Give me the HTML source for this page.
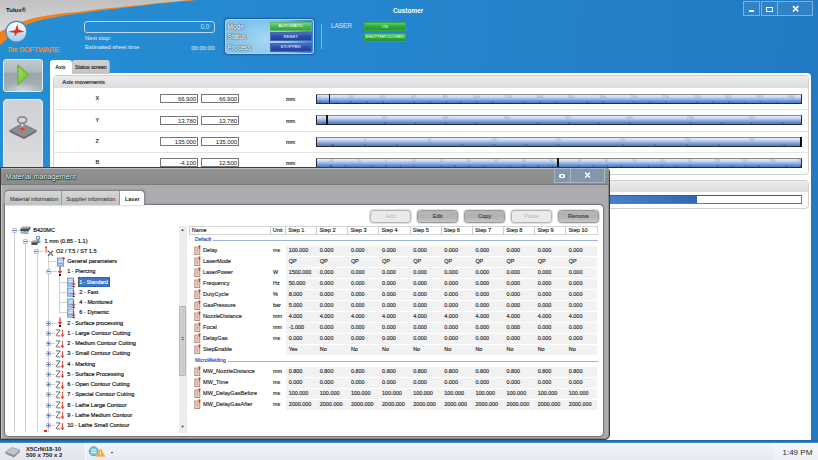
<!DOCTYPE html>
<html>
<head>
<meta charset="utf-8">
<style>
html,body{margin:0;padding:0;}
body{width:818px;height:460px;overflow:hidden;position:relative;background:#2281c9;font-family:"Liberation Sans",sans-serif;font-size:6px;color:#222;}
.abs{position:absolute;}
div,span{box-sizing:border-box;}
.t{position:absolute;white-space:nowrap;line-height:1;}
.b{-webkit-text-stroke:0.18px #333;}
/* top area */
#bg{left:0;top:0;width:818px;height:460px;background:linear-gradient(95deg,#248fd4 0%,#2487cf 40%,#2279c2 100%);}
.wbtn{position:absolute;top:1px;height:15px;border:1px solid #7fb0dc;background:rgba(255,255,255,0.06);}
/* main panel */
#main{left:50px;top:73px;width:761px;height:380px;background:#fff;border-radius:0 4px 0 0;}
.tab{position:absolute;top:60px;height:14px;border-radius:3px 3px 0 0;}
.grp{position:absolute;border:1px solid #d0d0d0;border-radius:4px;background:#fff;overflow:hidden;}
.grph{position:absolute;left:0;top:0;right:0;background:linear-gradient(#ececec,#dcdcdc);}
.inp{position:absolute;width:38px;height:9.4px;border:1px solid #777;background:#fff;font-size:6.1px;text-align:right;padding-right:1px;line-height:8.2px;color:#222;letter-spacing:-0.1px;}
.sl{position:absolute;left:316px;width:486px;height:10px;border:1px solid #2a2a2a;border-top-color:#8c8884;border-bottom:1px solid #2c2c2c;background:linear-gradient(#e6ecf6 0%,#cfdcf1 25%,#9bb8e4 50%,#6a95d6 75%,#4679c8 100%);overflow:hidden;}
.tk{position:absolute;left:0;bottom:0;height:2.5px;width:100%;opacity:0.4;}
.sn{position:absolute;top:0.5px;font-size:3.2px;color:#8aa0c4;line-height:1;white-space:nowrap;transform:translateX(-50%);}
.rowline{position:absolute;left:53px;width:755px;height:1px;background:#e4e4e4;}
/* dialog */
#dlg{left:0;top:167px;width:610px;height:273px;background:#abacaf;border:1px solid #3c3c3c;border-radius:0 5px 5px 0;box-shadow:inset 1px 1px 0 #c4c4c4,inset -1px -1px 0 #8a8a8a;}
#dtitle{left:1px;top:0;width:608px;height:17px;background:linear-gradient(#929292,#8a8a8a);border-radius:0 4px 0 0;border-top:1px solid #bdbdbd;border-bottom:1px solid #7c7c7c;}
.dbtn{position:absolute;top:1px;height:15px;background:#8496aa;border:1px solid #aab6c4;}
.dtab{position:absolute;top:190.5px;height:14.5px;font-size:5.5px;line-height:16px;text-align:center;color:#222;}
#dwhite{left:5px;top:204.6px;width:598px;height:231.4px;background:#fff;border-radius:0 4px 4px 4px;box-shadow:0 0 1.5px 0.5px #707070;}
.btn{position:absolute;top:209.5px;width:41px;height:13px;border-radius:3.5px;border:1px solid #999;background:linear-gradient(#b6b6b6,#b2b2b2 55%,#c6c6c6);font-size:5.6px;text-align:center;line-height:11px;color:#333;box-shadow:0 0 0 1px #e2e2e2,0 0 2px #bbb;-webkit-text-stroke:0.12px #444;}
.btn.dis{background:#eaeaea;border-color:#b4b4b4;color:#b4b4b4;-webkit-text-stroke:0;}
.tr{position:absolute;font-size:5.6px;white-space:nowrap;line-height:7px;height:7px;color:#111;letter-spacing:0;-webkit-text-stroke:0.18px #222;}
.hd{position:absolute;top:226px;height:9px;font-size:5.6px;line-height:8.4px;border-left:1px solid #ccc;padding-left:2px;color:#1a1a1a;-webkit-text-stroke:0.15px #333;}
.cell{position:absolute;font-size:5.45px;line-height:7px;height:7px;white-space:nowrap;color:#1a1a1a;-webkit-text-stroke:0.15px #333;}
.rowbg{position:absolute;left:286px;width:311px;height:10px;background:#f2f2f2;}
.ico{position:absolute;width:6px;height:8px;background:linear-gradient(#edd2c8,#dcb0a2);border:1px solid #b48474;}
.ico:after{content:"";position:absolute;left:3px;top:-2px;width:2px;height:4px;background:#e02010;}
.exp{position:absolute;width:5px;height:5px;border:1px solid #b4c0d6;background:#fbfcfe;border-radius:1px;}
.exp:after{content:"";position:absolute;left:0;top:1px;width:3px;height:1px;background:#6474a6;}
.exp.pl:before{content:"";position:absolute;left:1px;top:0;width:1px;height:3px;background:#6474a6;}
.tline{position:absolute;background:#d0d0d0;}
</style>
</head>
<body>
<div id="bg" class="abs"></div>
<!-- top-left swoosh -->
<svg class="abs" style="left:0;top:0" width="260" height="60" viewBox="0 0 260 60">
 <defs><linearGradient id="gg" x1="0" y1="0" x2="0" y2="1"><stop offset="0" stop-color="#c0c0c0"/><stop offset="0.5" stop-color="#cecece"/><stop offset="1" stop-color="#dadada"/></linearGradient></defs>
 <path d="M0,0 L0,45 C1.1,44.0 4.5,41.0 6.7,39 C8.9,37.0 10.1,35.4 13.5,33 C16.9,30.6 22.6,26.6 27,24.5 C31.4,22.4 35.5,21.4 40,20.2 C44.5,19.0 49.5,18.4 54,17.5 C58.5,16.6 62.5,15.7 67,15 C71.5,14.3 76.5,13.8 81,13.2 C85.5,12.6 89.2,12.2 94,11.5 C98.8,10.8 102.3,10.2 110,9.3 C117.7,8.4 130.0,7.0 140,5.9 C150.0,4.8 160.5,3.6 170,2.6 C179.5,1.6 192.5,0.4 197,0 Z" fill="#f0821e"/>
 <path d="M0,0 L0,31.7 C2.2,30.6 9.0,26.9 13.5,25 C18.0,23.1 22.6,21.4 27,20 C31.4,18.6 35.5,17.7 40,16.8 C44.5,15.9 49.5,15.3 54,14.6 C58.5,13.9 62.5,13.3 67,12.8 C71.5,12.3 76.5,12.0 81,11.5 C85.5,11.0 89.2,10.4 94,9.8 C98.8,9.2 102.3,8.9 110,8.1 C117.7,7.3 130.0,5.9 140,4.9 C150.0,3.9 161.3,2.8 170,2 C178.7,1.2 188.3,0.3 192,0 Z" fill="url(#gg)"/>
</svg>
<div class="t" style="left:6px;top:7px;font-size:6px;font-weight:bold;color:#111;">Tulus®</div>
<!-- logo -->
<svg class="abs" style="left:4px;top:19px" width="25" height="25" viewBox="4 19 25 25">
 <defs><linearGradient id="lg" x1="0" y1="0" x2="0" y2="1"><stop offset="0" stop-color="#ffffff"/><stop offset="0.48" stop-color="#e6ecf6"/><stop offset="0.52" stop-color="#c4e0f2"/><stop offset="1" stop-color="#a4d0ec"/></linearGradient></defs>
 <circle cx="16.45" cy="31.8" r="10.4" fill="url(#lg)" stroke="#4486c8" stroke-width="1.2"/>
 <path d="M17.3,23.9 L18.4,29.6 L24.6,31.8 L17.6,32.7 L15,36.3 L14.5,32.7 L8.3,31.8 L15.3,30 Z" fill="#e03020"/>
</svg>
<div class="t" style="left:7px;top:46px;font-size:7.6px;font-weight:bold;color:#f28c34;letter-spacing:-0.35px;"><i style="font-size:6.4px">The</i> <span style="font-weight:normal;-webkit-text-stroke:0.25px #f28c34;">SOFTWARE</span></div>

<!-- top info -->
<div class="abs" style="left:84px;top:20.7px;width:130.5px;height:12px;border:1px solid #bcd8f0;border-radius:3px;"></div>
<div class="t" style="left:200.5px;top:23.5px;font-size:6.4px;color:#cfe2f4;">0.0</div>
<div class="t" style="left:85px;top:36.2px;font-size:5.8px;color:#e4f0fa;">Next stop:</div>
<div class="t" style="left:85px;top:45px;font-size:5.8px;color:#e4f0fa;">Estimated sheet time</div>
<div class="t" style="left:191.2px;top:45px;font-size:6px;color:#e4f0fa;">00:00:00</div>

<!-- mode box -->
<div class="abs" style="left:225px;top:18.8px;width:88.6px;height:35.6px;border:1px solid #b4d2ea;border-radius:3px;background:radial-gradient(ellipse 42px 30px at 40px 20px,#a8d8f4 0%,#8fcaee 50%,rgba(120,185,230,0) 100%),linear-gradient(90deg,#88c4ea 0%,#5cacde 55%,#3a8cd2 100%);box-shadow:0 0 1.5px 0.5px #1c5c98;"></div>
<div class="t" style="left:227.6px;top:23.8px;font-size:6.5px;color:#fff;-webkit-text-stroke:0.25px #dfe8f0;text-shadow:0 0 1px #234,0 0 1px #234,0 0 1.2px #345,0.4px 0.4px 0 #345;">Mode</div>
<div class="t" style="left:227.6px;top:34.3px;font-size:6.5px;color:#fff;-webkit-text-stroke:0.25px #dfe8f0;text-shadow:0 0 1px #234,0 0 1px #234,0 0 1.2px #345,0.4px 0.4px 0 #345;">Status</div>
<div class="t" style="left:227.6px;top:45px;font-size:6.5px;color:#fff;-webkit-text-stroke:0.25px #dfe8f0;text-shadow:0 0 1px #234,0 0 1px #234,0 0 1.2px #345,0.4px 0.4px 0 #345;">Process</div>
<div class="abs" style="left:269.5px;top:21.7px;width:42.5px;height:9.3px;background:linear-gradient(#7cd880,#48b854 50%,#34a444);border:1px solid #58b860;"></div>
<div class="t" style="left:269.5px;top:24.2px;width:42.5px;text-align:center;font-size:4.3px;color:#fff;">AUTOMATIC</div>
<div class="abs" style="left:269.5px;top:32.3px;width:42.5px;height:9px;background:linear-gradient(#4c6cc4,#2e4caa 50%,#26409a);border:1px solid #4666b4;"></div>
<div class="t" style="left:269.5px;top:34.8px;width:42.5px;text-align:center;font-size:4.3px;color:#fff;">RESET</div>
<div class="abs" style="left:269.5px;top:42.8px;width:42.5px;height:9px;background:linear-gradient(#4c6cc4,#2e4caa 50%,#26409a);border:1px solid #4666b4;"></div>
<div class="t" style="left:269.5px;top:45.3px;width:42.5px;text-align:center;font-size:4.3px;color:#fff;">STOPPED</div>
<div class="abs" style="left:321px;top:24px;width:1px;height:25px;background:#86b6de;"></div>
<div class="t" style="left:331px;top:23px;font-size:6.4px;color:#cadcee;-webkit-text-stroke:0.15px #cadcee;">LASER</div>
<div class="abs" style="left:363.9px;top:22px;width:42px;height:9px;background:linear-gradient(#5ccc64,#2ea63e 50%,#249434);border:1px solid #3aa848;"></div>
<div class="t" style="left:363.9px;top:24.5px;width:42px;text-align:center;font-size:4.3px;color:#fff;">ON</div>
<div class="abs" style="left:363.9px;top:33px;width:42px;height:8.6px;background:linear-gradient(#5ccc64,#2ea63e 50%,#249434);border:1px solid #3aa848;"></div>
<div class="t" style="left:363.9px;top:35.3px;width:42px;text-align:center;font-size:4.3px;color:#fff;">SHUTTER CLOSED</div>
<div class="t" style="left:393px;top:7.8px;font-size:6.5px;font-weight:bold;color:#fff;">Customer</div>

<!-- window buttons -->
<div class="wbtn" style="left:743px;width:17px;"></div>
<div class="wbtn" style="left:761px;width:17px;"></div>
<div class="wbtn" style="left:777px;width:36px;"></div>
<div class="abs" style="left:748.8px;top:9.6px;width:5.2px;height:2px;background:#fff;"></div>
<div class="abs" style="left:766px;top:7.2px;width:6.8px;height:4.5px;border:1.5px solid #fff;"></div>
<svg class="abs" style="left:791px;top:5px" width="10" height="8" viewBox="0 0 10 8"><path d="M2,1.2 L7.3,6.5 M7.3,1.2 L2,6.5" stroke="#fff" stroke-width="1.7"/></svg>

<!-- left buttons -->
<div class="abs" style="left:2.5px;top:59px;width:40.5px;height:33.3px;border-radius:3px;border:1px solid #e6ecee;background:radial-gradient(ellipse 18px 9px at 50% 100%,rgba(214,222,226,0.95),rgba(200,208,212,0) 100%),linear-gradient(#c2cace 0%,#adb9be 40%,#98a6ac 41%,#9eacb2 70%,#aab6ba 100%);"></div>
<svg class="abs" style="left:16px;top:63px" width="15" height="24" viewBox="16 63 15 24"><defs><linearGradient id="pg" x1="0" y1="0" x2="1" y2="1"><stop offset="0" stop-color="#a4dc58"/><stop offset="1" stop-color="#74be3c"/></linearGradient></defs><path d="M18,65.5 L28.3,74.8 L18,84.3 Z" fill="url(#pg)" stroke="#78b840" stroke-width="1.8" stroke-linejoin="round"/></svg>
<div class="abs" style="left:2.5px;top:99px;width:40.5px;height:76px;border-radius:4px;border:1px solid #e8ecee;background:linear-gradient(#d2d2d6 0%,#d6d6d8 50%,#e0e0e2 100%);"></div>
<svg class="abs" style="left:8px;top:115px" width="30" height="25" viewBox="8 115 30 25">
 <path d="M9.6,130.5 L22,123.5 L36.5,130.5 L24,137.5 Z" fill="#8c8e90" stroke="#5c5e60" stroke-width="0.6"/>
 <path d="M9.6,130.5 L9.6,132 L24,139 L36.5,132 L36.5,130.5 L24,137.5 Z" fill="#606264"/>
 <path d="M20.8,122 L23.8,122 L22.8,129 L21.8,129 Z" fill="#bfe0f4"/>
 <path d="M22.3,126 L23.3,128.2 L25.6,129 L23.3,129.8 L22.3,132 L21.3,129.8 L19,129 L21.3,128.2 Z" fill="#f03828"/>
 <ellipse cx="22.2" cy="120" rx="4.4" ry="3.2" fill="none" stroke="#707274" stroke-width="1.6"/>
 <ellipse cx="22.2" cy="119.6" rx="4.4" ry="3.2" fill="none" stroke="#a4a6a8" stroke-width="0.6"/>
</svg>

<!-- MAIN PANEL -->
<div id="main" class="abs"></div>
<div class="tab" style="left:50px;width:22px;background:#fff;"></div>
<div class="tab" style="left:72px;width:38px;background:linear-gradient(#d0d0d0,#c4c4c4);border-right:1px solid #b0b0b0;"></div>
<div class="t b" style="left:55.5px;top:64.8px;font-size:5.2px;color:#222;">Axis</div>
<div class="t b" style="left:75px;top:64.8px;font-size:5.2px;color:#222;">Status screen</div>

<div class="grp" style="left:53px;top:75px;width:756px;height:100px;"><div class="grph" style="height:12px;"></div></div>
<div class="t b" style="left:62.3px;top:80px;font-size:5.8px;color:#222;">Axis movements</div>
<div class="grp" style="left:53px;top:180px;width:756px;height:29px;"><div class="grph" style="height:11px;"></div></div>
<div class="abs" style="left:600px;top:195.2px;width:202px;height:9.3px;border:1px solid #777;border-top-color:#555;background:#fff;"></div>
<div class="abs" style="left:600px;top:196.2px;width:96.8px;height:7.3px;background:linear-gradient(90deg,#4a82cc,#2e68b4);"></div>

<div class="rowline" style="top:109px;"></div>
<div class="rowline" style="top:131px;"></div>
<div class="rowline" style="top:152px;"></div>

<div class="t" style="left:95.6px;top:96.3px;font-size:5.5px;font-weight:bold;color:#333;">X</div>
<div class="t" style="left:95.6px;top:117.8px;font-size:5.5px;font-weight:bold;color:#333;">Y</div>
<div class="t" style="left:95.6px;top:139px;font-size:5.5px;font-weight:bold;color:#333;">Z</div>
<div class="t" style="left:95.6px;top:160.3px;font-size:5.5px;font-weight:bold;color:#333;">B</div>

<div class="inp" style="left:160px;top:94px;">66.900</div><div class="inp" style="left:201px;top:94px;">66.900</div>
<div class="inp" style="left:160px;top:116px;">13.780</div><div class="inp" style="left:201px;top:116px;">13.780</div>
<div class="inp" style="left:160px;top:137px;">135.000</div><div class="inp" style="left:201px;top:137px;">135.000</div>
<div class="inp" style="left:160px;top:158px;">-4.100</div><div class="inp" style="left:201px;top:158px;">12.500</div>

<div class="t b" style="left:286px;top:97px;font-size:5.5px;color:#222;">mm</div>
<div class="t b" style="left:286px;top:118.5px;font-size:5.5px;color:#222;">mm</div>
<div class="t b" style="left:286px;top:140px;font-size:5.5px;color:#222;">mm</div>
<div class="t b" style="left:286px;top:161px;font-size:5.5px;color:#222;">mm</div>

<div class="sl" style="top:94px;"><div class="tk" style="background:repeating-linear-gradient(90deg,#1c2c50 0,#1c2c50 0.8px,transparent 0.8px,transparent 15.72px);background-position:2.6px 0;"></div><div class="sn" style="left:2.6px;">0</div><div class="sn" style="left:34.0px;">200</div><div class="sn" style="left:65.5px;">400</div><div class="sn" style="left:96.9px;">600</div><div class="sn" style="left:128.4px;">800</div><div class="sn" style="left:159.8px;">1000</div><div class="sn" style="left:191.2px;">1200</div><div class="sn" style="left:222.7px;">1400</div><div class="sn" style="left:254.1px;">1600</div><div class="sn" style="left:285.6px;">1800</div><div class="sn" style="left:317.0px;">2000</div><div class="sn" style="left:348.4px;">2200</div><div class="sn" style="left:379.9px;">2400</div><div class="sn" style="left:411.3px;">2600</div><div class="sn" style="left:442.8px;">2800</div><div class="sn" style="left:474.2px;">3000</div></div>
<div class="sl" style="top:115px;"><div class="tk" style="background:repeating-linear-gradient(90deg,#1c2c50 0,#1c2c50 0.8px,transparent 0.8px,transparent 30.6px);background-position:6.2px 0;"></div><div class="sn" style="left:6.2px;">0</div><div class="sn" style="left:67.4px;">200</div><div class="sn" style="left:128.6px;">400</div><div class="sn" style="left:189.8px;">600</div><div class="sn" style="left:251.0px;">800</div><div class="sn" style="left:312.2px;">1000</div><div class="sn" style="left:373.4px;">1200</div><div class="sn" style="left:434.6px;">1400</div></div>
<div class="sl" style="top:137px;"><div class="tk" style="background:repeating-linear-gradient(90deg,#1c2c50 0,#1c2c50 0.8px,transparent 0.8px,transparent 32.2px);background-position:15.6px 0;"></div><div class="sn" style="left:47.8px;">0</div><div class="sn" style="left:112.3px;">50</div><div class="sn" style="left:176.8px;">100</div><div class="sn" style="left:241.3px;">150</div><div class="sn" style="left:305.8px;">200</div><div class="sn" style="left:370.3px;">250</div><div class="sn" style="left:434.8px;">300</div></div>
<div class="sl" style="top:158px;"><div class="tk" style="background:repeating-linear-gradient(90deg,#1c2c50 0,#1c2c50 0.8px,transparent 0.8px,transparent 13.8px);background-position:13.8px 0;"></div><div class="sn" style="left:13.8px;">-20</div><div class="sn" style="left:41.4px;">-10</div><div class="sn" style="left:69.0px;">0</div><div class="sn" style="left:96.6px;">10</div><div class="sn" style="left:124.2px;">20</div><div class="sn" style="left:151.8px;">30</div><div class="sn" style="left:179.4px;">40</div><div class="sn" style="left:207.0px;">50</div><div class="sn" style="left:234.6px;">60</div><div class="sn" style="left:262.2px;">70</div><div class="sn" style="left:289.8px;">80</div><div class="sn" style="left:317.4px;">90</div><div class="sn" style="left:345.0px;">100</div><div class="sn" style="left:372.6px;">110</div><div class="sn" style="left:400.2px;">120</div><div class="sn" style="left:427.8px;">130</div><div class="sn" style="left:455.4px;">140</div><div class="sn" style="left:483.0px;">150</div></div>
<div class="abs" style="left:328.5px;top:94px;width:1.5px;height:10px;background:#111;"></div>
<div class="abs" style="left:326.1px;top:115px;width:1.5px;height:10px;background:#111;"></div>
<div class="abs" style="left:800px;top:137px;width:2px;height:10px;background:#111;"></div>
<div class="abs" style="left:557px;top:158px;width:1.5px;height:10px;background:#111;"></div>

<!-- taskbar -->
<div class="abs" style="left:0;top:440px;width:818px;height:3.2px;background:linear-gradient(#1c66a8,#1f74ba 60%,#5a9ad0);"></div>
<div class="abs" style="left:0;top:443px;width:818px;height:17px;background:linear-gradient(#f3f4fa,#e8eaf3);"></div>
<div class="abs" style="left:0;top:443px;width:85px;height:17px;background:linear-gradient(#eceef6,#e2e4ee);"></div>
<div class="abs" style="left:773px;top:443px;width:45px;height:17px;background:linear-gradient(#f6f7fb,#eef0f6);"></div>
<div class="t" style="left:26px;top:446.8px;font-size:5.95px;font-weight:bold;color:#222;">X5CrNi18-10</div>
<div class="t" style="left:26px;top:453.3px;font-size:5.95px;font-weight:bold;color:#222;">500 x 750 x 2</div>
<div class="abs" style="left:85px;top:443px;width:1px;height:17px;background:#fafbfe;"></div>
<svg class="abs" style="left:4px;top:445px" width="18" height="14" viewBox="0 0 18 14"><path d="M1.5,7 L8,2.5 L16,5 L10,10.5 Z" fill="#c2c6c8" stroke="#8c9092" stroke-width="0.6"/><path d="M1.5,7 L1.5,8.8 L10,12.5 L16,6.8 L16,5 L10,10.5 Z" fill="#8a8e90"/></svg>
<svg class="abs" style="left:88px;top:445px" width="18" height="13" viewBox="88 445 18 13"><circle cx="93.7" cy="451.2" r="4.4" fill="#7cc8dc" stroke="#3a98b4" stroke-width="0.9"/><rect x="91.3" y="449.4" width="4.8" height="1.1" fill="#e8f6fa"/><rect x="91.3" y="451.8" width="4.8" height="1.1" fill="#e8f6fa"/><path d="M100.3,448.6 L105,456.6 L95.7,456.6 Z" fill="#f8a428" stroke="#f0c070" stroke-width="0.7" stroke-linejoin="round"/><rect x="99.9" y="451" width="0.9" height="3" fill="#fff"/><rect x="99.9" y="454.6" width="0.9" height="0.9" fill="#fff"/></svg>
<div class="abs" style="left:111px;top:451.7px;width:2.3px;height:0.9px;background:#444;"></div>
<div class="t" style="left:782.5px;top:449px;font-size:8px;color:#2a2a2a;">1:49 PM</div>

<!-- DIALOG -->
<div id="dlg" class="abs"></div>
<div id="dtitle" class="abs" style="left:1px;top:168px;"></div>
<div class="t" style="left:5.6px;top:173px;font-size:7.25px;color:#fff;text-shadow:0 0 1px #222,0 0 1px #222,0 0 1.5px #333,0.5px 0.5px 0 #333;">Material management</div>
<div class="dbtn" style="left:554px;top:168px;width:17px;"></div>
<div class="dbtn" style="left:570px;top:168px;width:35px;"></div>
<div class="abs" style="left:558.8px;top:173.6px;width:6.6px;height:4.2px;border-radius:1.6px;background:#fff;"></div>
<div class="abs" style="left:561.2px;top:174.8px;width:2px;height:2px;border-radius:1px;background:#667;"></div>
<svg class="abs" style="left:583px;top:171px" width="10" height="8" viewBox="0 0 10 8"><path d="M2.3,1.6 L6.9,6.4 M6.9,1.6 L2.3,6.4" stroke="#fff" stroke-width="1.5"/></svg>

<div id="dwhite" class="abs"></div>
<div class="abs" style="left:4.5px;top:190px;width:140.5px;height:15px;border-radius:4px 4px 0 0;background:#888;box-shadow:0 0 1.5px #666;"></div>
<div class="dtab" style="left:5.3px;width:57px;background:linear-gradient(#d6d6d6,#c2c2c2);border-right:1px solid #9c9c9c;border-radius:3.5px 0 0 0;padding-left:1.5px;">Material information</div>
<div class="dtab" style="left:62.3px;width:58px;background:linear-gradient(#d6d6d6,#c2c2c2);border-right:1px solid #9c9c9c;">Supplier information</div>
<div class="dtab" style="left:120.3px;width:24px;background:#fff;font-weight:bold;border-radius:0 3.5px 0 0;">Laser</div>

<div class="btn dis" style="left:370px;">Add</div>
<div class="btn" style="left:417px;">Edit</div>
<div class="btn" style="left:464px;">Copy</div>
<div class="btn dis" style="left:511px;">Paste</div>
<div class="btn" style="left:558px;">Remove</div>

<!--TREE-->
<div class="tline" style="left:13.6px;top:230.9px;width:1px;height:201.1px;"></div>
<div class="tline" style="left:25.0px;top:241.2px;width:1px;height:190.8px;"></div>
<div class="tline" style="left:36.5px;top:251.4px;width:1px;height:180.6px;"></div>
<div class="tline" style="left:48.3px;top:255.4px;width:1px;height:176.6px;"></div>
<div class="tline" style="left:59.3px;top:274.9px;width:1px;height:38.0px;"></div>
<div class="tline" style="left:14.1px;top:230.4px;width:6.9px;height:1px;"></div>
<div class="exp" style="left:12px;top:228px;"></div>
<svg class="abs" style="left:20.3px;top:226.3px" width="11" height="9" viewBox="0 0 11 9"><path d="M2.4,0.6 L10.4,0.6 L8.4,2.6 L0.4,2.6 Z" fill="#a6a6a6"/><path d="M0.4,2.6 L8.4,2.6 L10.4,0.6 L10.4,2.8 L8.4,5.2 L0.4,5.2 Z" fill="#4c4c4c"/><path d="M0.8,7.6 L1.8,5.6 L2.8,7.6 M3.8,5.6 L3.8,7.6 L5.4,7.6 L5.4,5.6 Z M8.6,5.8 L6.8,5.8 L6.8,7.6 L8.6,7.6" fill="none" stroke="#3a72d8" stroke-width="0.8"/></svg>
<div class="tr" style="left:33.2px;top:227.4px;">B420MC</div>
<div class="tline" style="left:25.5px;top:240.7px;width:6.5px;height:1px;"></div>
<div class="exp" style="left:23px;top:239px;"></div>
<svg class="abs" style="left:31.3px;top:236.2px" width="11" height="10" viewBox="0 0 11 10"><path d="M2.2,4.2 L7.6,4.2 L5.8,6.2 L0.4,6.2 Z" fill="#a6a6a6"/><path d="M0.4,6.2 L5.8,6.2 L7.6,4.2 L7.6,6.4 L5.8,9 L0.4,9 Z" fill="#4c4c4c"/><path d="M5.4,0.6 L8.6,0.6 L8.6,3.2 L5.4,3.2 Z M7,3.2 L7,7 M8.8,4.4 L8.8,7.2" fill="none" stroke="#3a78dc" stroke-width="0.9"/></svg>
<div class="tr" style="left:44.6px;top:237.7px;">1 mm (0.85 - 1.1)</div>
<div class="tline" style="left:37.0px;top:250.9px;width:6.0px;height:1px;"></div>
<div class="exp" style="left:34px;top:249px;"></div>
<svg class="abs" style="left:44.6px;top:245.8px" width="9" height="11" viewBox="0 0 9 11"><rect x="0.6" y="1.4" width="0.9" height="5.6" fill="#e43828"/><circle cx="1.05" cy="1.2" r="1" fill="#e43828"/><path d="M2.6,4.6 L8,9.6 M8,4.8 L3,9.8" stroke="#3c3c3c" stroke-width="1.1"/><path d="M4.4,6.4 L6.4,8.2" stroke="#d8b040" stroke-width="1"/></svg>
<div class="tr" style="left:56.0px;top:247.9px;">O2 / T.5 / ST 1.5</div>
<div class="tline" style="left:48.8px;top:261.1px;width:7.2px;height:1px;"></div>
<svg class="abs" style="left:56.7px;top:256.6px" width="10" height="11" viewBox="0 0 10 11"><rect x="0.4" y="1" width="6.2" height="8.2" fill="#a9c8ec" stroke="#5a94d8" stroke-width="0.8"/><rect x="1.6" y="2.4" width="3.8" height="0.8" fill="#e8f0fa"/><rect x="1.6" y="4.2" width="3.8" height="0.8" fill="#e8f0fa"/><rect x="1.6" y="6" width="3.8" height="0.8" fill="#6a9ad8"/><circle cx="6.6" cy="1.4" r="1.2" fill="#e83020"/></svg>
<div class="tr" style="left:67.2px;top:258.1px;">General parameters</div>
<div class="tline" style="left:48.8px;top:271.4px;width:8.2px;height:1px;"></div>
<div class="exp" style="left:46px;top:269px;"></div>
<svg class="abs" style="left:56.8px;top:265.9px" width="6" height="11" viewBox="0 0 6 11"><rect x="2.4" y="0.5" width="1.2" height="5.5" fill="#e03020"/><path d="M0.8,5 L5.2,5 L3,8 Z" fill="#e03020"/><rect x="2" y="8" width="2" height="2" fill="#222"/></svg>
<div class="tr" style="left:67.2px;top:268.4px;">1 - Piercing</div>
<div class="tline" style="left:59.8px;top:281.6px;width:7.2px;height:1px;"></div>
<svg class="abs" style="left:66.7px;top:277.1px" width="10" height="11" viewBox="0 0 10 11"><rect x="0.4" y="1" width="6.2" height="8.2" fill="#a9c8ec" stroke="#5a94d8" stroke-width="0.8"/><rect x="1.6" y="2.4" width="3.8" height="0.8" fill="#e8f0fa"/><rect x="1.6" y="4.2" width="3.8" height="0.8" fill="#e8f0fa"/><rect x="1.6" y="6" width="3.8" height="0.8" fill="#6a9ad8"/><rect x="6.1" y="2.8" width="1.1" height="4.4" fill="#e83424"/><path d="M4.6,6.4 L8.8,6.4 L6.7,8.8 Z" fill="#e83424"/><rect x="5.8" y="9" width="1.8" height="1.2" fill="#222"/></svg>
<div class="abs" style="left:78.2px;top:276.5px;width:31.8px;height:10.6px;background:#3a76cc;border:1px dotted #54463a;"></div>
<div class="tr" style="left:79.3px;top:278.6px;color:#fff;-webkit-text-stroke:0.1px #fff;letter-spacing:-0.2px;">1 - Standard</div>
<div class="tline" style="left:59.8px;top:291.9px;width:7.2px;height:1px;"></div>
<svg class="abs" style="left:66.7px;top:287.4px" width="10" height="11" viewBox="0 0 10 11"><rect x="0.4" y="1" width="6.2" height="8.2" fill="#a9c8ec" stroke="#5a94d8" stroke-width="0.8"/><rect x="1.6" y="2.4" width="3.8" height="0.8" fill="#e8f0fa"/><rect x="1.6" y="4.2" width="3.8" height="0.8" fill="#e8f0fa"/><rect x="1.6" y="6" width="3.8" height="0.8" fill="#6a9ad8"/><rect x="6.1" y="2.8" width="1.1" height="4.4" fill="#e83424"/><path d="M4.6,6.4 L8.8,6.4 L6.7,8.8 Z" fill="#e83424"/><rect x="5.8" y="9" width="1.8" height="1.2" fill="#222"/></svg>
<div class="tr" style="left:79.3px;top:288.9px;">2 - Fast</div>
<div class="tline" style="left:59.8px;top:302.1px;width:7.2px;height:1px;"></div>
<svg class="abs" style="left:66.7px;top:297.6px" width="10" height="11" viewBox="0 0 10 11"><rect x="0.4" y="1" width="6.2" height="8.2" fill="#a9c8ec" stroke="#5a94d8" stroke-width="0.8"/><rect x="1.6" y="2.4" width="3.8" height="0.8" fill="#e8f0fa"/><rect x="1.6" y="4.2" width="3.8" height="0.8" fill="#e8f0fa"/><rect x="1.6" y="6" width="3.8" height="0.8" fill="#6a9ad8"/><rect x="6.1" y="2.8" width="1.1" height="4.4" fill="#e83424"/><path d="M4.6,6.4 L8.8,6.4 L6.7,8.8 Z" fill="#e83424"/><rect x="5.8" y="9" width="1.8" height="1.2" fill="#222"/></svg>
<div class="tr" style="left:79.3px;top:299.1px;">4 - Monitored</div>
<div class="tline" style="left:59.8px;top:312.4px;width:7.2px;height:1px;"></div>
<svg class="abs" style="left:66.7px;top:307.9px" width="10" height="11" viewBox="0 0 10 11"><rect x="0.4" y="1" width="6.2" height="8.2" fill="#a9c8ec" stroke="#5a94d8" stroke-width="0.8"/><rect x="1.6" y="2.4" width="3.8" height="0.8" fill="#e8f0fa"/><rect x="1.6" y="4.2" width="3.8" height="0.8" fill="#e8f0fa"/><rect x="1.6" y="6" width="3.8" height="0.8" fill="#6a9ad8"/><rect x="6.1" y="2.8" width="1.1" height="4.4" fill="#e83424"/><path d="M4.6,6.4 L8.8,6.4 L6.7,8.8 Z" fill="#e83424"/><rect x="5.8" y="9" width="1.8" height="1.2" fill="#222"/></svg>
<div class="tr" style="left:79.3px;top:309.4px;">6 - Dynamic</div>
<div class="tline" style="left:48.8px;top:322.6px;width:8.2px;height:1px;"></div>
<div class="exp pl" style="left:46px;top:321px;"></div>
<svg class="abs" style="left:56.8px;top:317.1px" width="6" height="11" viewBox="0 0 6 11"><rect x="2.4" y="0.5" width="1.2" height="5.5" fill="#e03020"/><path d="M0.8,5 L5.2,5 L3,8 Z" fill="#e03020"/><rect x="2" y="8" width="2" height="2" fill="#222"/></svg>
<div class="tr" style="left:67.2px;top:319.6px;">2 - Surface processing</div>
<div class="tline" style="left:48.8px;top:332.9px;width:6.2px;height:1px;"></div>
<div class="exp pl" style="left:46px;top:331px;"></div>
<svg class="abs" style="left:55.0px;top:328.4px" width="11" height="10" viewBox="0 0 11 10"><path d="M0.9,1.8 L5.2,2 L1.2,7.2 Q1,7.8 1.8,7.8 L5.4,8" fill="none" stroke="#3c3c3c" stroke-width="0.75"/><rect x="7.1" y="2" width="0.8" height="5.5" fill="#e83828"/><path d="M5.6,6.6 L9.4,6.6 L7.5,9.2 Z" fill="#e83828"/></svg>
<div class="tr" style="left:67.2px;top:329.9px;">1 - Large Contour Cutting</div>
<div class="tline" style="left:48.8px;top:343.1px;width:6.2px;height:1px;"></div>
<div class="exp pl" style="left:46px;top:341px;"></div>
<svg class="abs" style="left:55.0px;top:338.6px" width="11" height="10" viewBox="0 0 11 10"><path d="M0.9,1.8 L5.2,2 L1.2,7.2 Q1,7.8 1.8,7.8 L5.4,8" fill="none" stroke="#3c3c3c" stroke-width="0.75"/><rect x="7.1" y="2" width="0.8" height="5.5" fill="#e83828"/><path d="M5.6,6.6 L9.4,6.6 L7.5,9.2 Z" fill="#e83828"/></svg>
<div class="tr" style="left:67.2px;top:340.1px;">2 - Medium Contour Cutting</div>
<div class="tline" style="left:48.8px;top:353.4px;width:6.2px;height:1px;"></div>
<div class="exp pl" style="left:46px;top:351px;"></div>
<svg class="abs" style="left:55.0px;top:348.9px" width="11" height="10" viewBox="0 0 11 10"><path d="M0.9,1.8 L5.2,2 L1.2,7.2 Q1,7.8 1.8,7.8 L5.4,8" fill="none" stroke="#3c3c3c" stroke-width="0.75"/><rect x="7.1" y="2" width="0.8" height="5.5" fill="#e83828"/><path d="M5.6,6.6 L9.4,6.6 L7.5,9.2 Z" fill="#e83828"/></svg>
<div class="tr" style="left:67.2px;top:350.4px;">3 - Small Contour Cutting</div>
<div class="tline" style="left:48.8px;top:363.6px;width:6.2px;height:1px;"></div>
<div class="exp pl" style="left:46px;top:362px;"></div>
<svg class="abs" style="left:55.0px;top:359.1px" width="11" height="10" viewBox="0 0 11 10"><path d="M0.9,1.8 L5.2,2 L1.2,7.2 Q1,7.8 1.8,7.8 L5.4,8" fill="none" stroke="#3c3c3c" stroke-width="0.75"/><rect x="7.1" y="2" width="0.8" height="5.5" fill="#e83828"/><path d="M5.6,6.6 L9.4,6.6 L7.5,9.2 Z" fill="#e83828"/></svg>
<div class="tr" style="left:67.2px;top:360.6px;">4 - Marking</div>
<div class="tline" style="left:48.8px;top:373.9px;width:6.2px;height:1px;"></div>
<div class="exp pl" style="left:46px;top:372px;"></div>
<svg class="abs" style="left:55.0px;top:369.4px" width="11" height="10" viewBox="0 0 11 10"><path d="M0.9,1.8 L5.2,2 L1.2,7.2 Q1,7.8 1.8,7.8 L5.4,8" fill="none" stroke="#3c3c3c" stroke-width="0.75"/><rect x="7.1" y="2" width="0.8" height="5.5" fill="#e83828"/><path d="M5.6,6.6 L9.4,6.6 L7.5,9.2 Z" fill="#e83828"/></svg>
<div class="tr" style="left:67.2px;top:370.9px;">5 - Surface Processing</div>
<div class="tline" style="left:48.8px;top:384.1px;width:6.2px;height:1px;"></div>
<div class="exp pl" style="left:46px;top:382px;"></div>
<svg class="abs" style="left:55.0px;top:379.6px" width="11" height="10" viewBox="0 0 11 10"><path d="M0.9,1.8 L5.2,2 L1.2,7.2 Q1,7.8 1.8,7.8 L5.4,8" fill="none" stroke="#3c3c3c" stroke-width="0.75"/><rect x="7.1" y="2" width="0.8" height="5.5" fill="#e83828"/><path d="M5.6,6.6 L9.4,6.6 L7.5,9.2 Z" fill="#e83828"/></svg>
<div class="tr" style="left:67.2px;top:381.1px;">6 - Open Contour Cutting</div>
<div class="tline" style="left:48.8px;top:394.4px;width:6.2px;height:1px;"></div>
<div class="exp pl" style="left:46px;top:392px;"></div>
<svg class="abs" style="left:55.0px;top:389.9px" width="11" height="10" viewBox="0 0 11 10"><path d="M0.9,1.8 L5.2,2 L1.2,7.2 Q1,7.8 1.8,7.8 L5.4,8" fill="none" stroke="#3c3c3c" stroke-width="0.75"/><rect x="7.1" y="2" width="0.8" height="5.5" fill="#e83828"/><path d="M5.6,6.6 L9.4,6.6 L7.5,9.2 Z" fill="#e83828"/></svg>
<div class="tr" style="left:67.2px;top:391.4px;">7 - Special Contour Cutting</div>
<div class="tline" style="left:48.8px;top:404.6px;width:6.2px;height:1px;"></div>
<div class="exp pl" style="left:46px;top:403px;"></div>
<svg class="abs" style="left:55.0px;top:400.1px" width="11" height="10" viewBox="0 0 11 10"><path d="M0.9,1.8 L5.2,2 L1.2,7.2 Q1,7.8 1.8,7.8 L5.4,8" fill="none" stroke="#3c3c3c" stroke-width="0.75"/><rect x="7.1" y="2" width="0.8" height="5.5" fill="#e83828"/><path d="M5.6,6.6 L9.4,6.6 L7.5,9.2 Z" fill="#e83828"/></svg>
<div class="tr" style="left:67.2px;top:401.6px;">8 - Lathe Large Contour</div>
<div class="tline" style="left:48.8px;top:414.9px;width:6.2px;height:1px;"></div>
<div class="exp pl" style="left:46px;top:413px;"></div>
<svg class="abs" style="left:55.0px;top:410.4px" width="11" height="10" viewBox="0 0 11 10"><path d="M0.9,1.8 L5.2,2 L1.2,7.2 Q1,7.8 1.8,7.8 L5.4,8" fill="none" stroke="#3c3c3c" stroke-width="0.75"/><rect x="7.1" y="2" width="0.8" height="5.5" fill="#e83828"/><path d="M5.6,6.6 L9.4,6.6 L7.5,9.2 Z" fill="#e83828"/></svg>
<div class="tr" style="left:67.2px;top:411.9px;">9 - Lathe Medium Contour</div>
<div class="tline" style="left:48.8px;top:425.1px;width:6.2px;height:1px;"></div>
<div class="exp pl" style="left:46px;top:423px;"></div>
<svg class="abs" style="left:55.0px;top:420.6px" width="11" height="10" viewBox="0 0 11 10"><path d="M0.9,1.8 L5.2,2 L1.2,7.2 Q1,7.8 1.8,7.8 L5.4,8" fill="none" stroke="#3c3c3c" stroke-width="0.75"/><rect x="7.1" y="2" width="0.8" height="5.5" fill="#e83828"/><path d="M5.6,6.6 L9.4,6.6 L7.5,9.2 Z" fill="#e83828"/></svg>
<div class="tr" style="left:67.2px;top:422.1px;">10 - Lathe Small Contour</div>
<div class="abs" style="left:44px;top:430px;width:3px;height:1.5px;background:#e03020;"></div>
<div class="abs" style="left:178.5px;top:226px;width:8px;height:207px;background:#ececec;"></div>
<div class="abs" style="left:179px;top:306px;width:7px;height:70px;background:linear-gradient(90deg,#d8d8da,#c6c6ca 60%,#d4d4d6);border:1px solid #b4b4b8;border-radius:1px;"></div>
<div class="abs" style="left:181px;top:337px;width:3px;height:1px;background:#777;"></div><div class="abs" style="left:181px;top:339px;width:3px;height:1px;background:#777;"></div>
<div class="t" style="left:180.5px;top:228px;font-size:4px;color:#333;">▲</div>
<div class="t" style="left:180.5px;top:425px;font-size:4px;color:#333;">▼</div>
<!--/TREE-->
<!--TABLE-->
<div class="abs" style="left:189px;top:226px;width:409px;height:9px;border:1px solid #d4d4d4;border-left:none;background:#fff;"></div>
<div class="hd" style="left:188.8px;">Name</div>
<div class="hd" style="left:269.7px;">Unit</div>
<div class="hd" style="left:285.3px;">Step 1</div>
<div class="hd" style="left:316.4px;">Step 2</div>
<div class="hd" style="left:347.4px;">Step 3</div>
<div class="hd" style="left:378.4px;">Step 4</div>
<div class="hd" style="left:409.7px;">Step 5</div>
<div class="hd" style="left:440.8px;">Step 6</div>
<div class="hd" style="left:471.9px;">Step 7</div>
<div class="hd" style="left:503.3px;">Step 8</div>
<div class="hd" style="left:534.4px;">Step 9</div>
<div class="hd" style="left:565.4px;">Step 10</div>
<div class="abs" style="left:193px;top:239.5px;width:405px;height:1px;background:#9ab4e0;"></div>
<div class="t" style="left:192.5px;top:236.9px;padding-left:2.6px;font-size:5.1px;-webkit-text-stroke:0.15px #3050c8;color:#2040c0;background:#fff;padding-right:2px;">Default</div>
<div class="rowbg" style="top:245.5px;"></div>
<svg class="abs" style="left:193.5px;top:245.0px" width="8" height="11" viewBox="0 0 8 11"><rect x="0.8" y="2" width="5" height="7.6" fill="#ecd8ce" stroke="#a87c6c" stroke-width="0.8"/><path d="M2,4 L4.6,4 M2,5.6 L4.6,5.6 M2,7.2 L4.6,7.2 M3.3,3.2 L3.3,8.4" stroke="#c8a090" stroke-width="0.6"/><rect x="4.9" y="1" width="1.2" height="3" fill="#e43828"/><circle cx="5.5" cy="1.2" r="1" fill="#e43828"/></svg>
<div class="cell" style="left:203px;top:247.0px;font-size:5.6px;">Delay</div>
<div class="cell" style="left:273px;top:247.0px;">ms</div>
<div class="cell" style="left:288.7px;top:247.0px;">100.000</div>
<div class="cell" style="left:319.8px;top:247.0px;">0.000</div>
<div class="cell" style="left:350.9px;top:247.0px;">0.000</div>
<div class="cell" style="left:382.1px;top:247.0px;">0.000</div>
<div class="cell" style="left:413.2px;top:247.0px;">0.000</div>
<div class="cell" style="left:444.3px;top:247.0px;">0.000</div>
<div class="cell" style="left:475.4px;top:247.0px;">0.000</div>
<div class="cell" style="left:506.5px;top:247.0px;">0.000</div>
<div class="cell" style="left:537.7px;top:247.0px;">0.000</div>
<div class="cell" style="left:568.8px;top:247.0px;">0.000</div>
<div class="rowbg" style="top:256.6px;"></div>
<svg class="abs" style="left:193.5px;top:256.1px" width="8" height="11" viewBox="0 0 8 11"><rect x="0.8" y="2" width="5" height="7.6" fill="#ecd8ce" stroke="#a87c6c" stroke-width="0.8"/><path d="M2,4 L4.6,4 M2,5.6 L4.6,5.6 M2,7.2 L4.6,7.2 M3.3,3.2 L3.3,8.4" stroke="#c8a090" stroke-width="0.6"/><rect x="4.9" y="1" width="1.2" height="3" fill="#e43828"/><circle cx="5.5" cy="1.2" r="1" fill="#e43828"/></svg>
<div class="cell" style="left:203px;top:258.1px;font-size:5.6px;">LaserMode</div>
<div class="cell" style="left:288.7px;top:258.1px;">QP</div>
<div class="cell" style="left:319.8px;top:258.1px;">QP</div>
<div class="cell" style="left:350.9px;top:258.1px;">QP</div>
<div class="cell" style="left:382.1px;top:258.1px;">QP</div>
<div class="cell" style="left:413.2px;top:258.1px;">QP</div>
<div class="cell" style="left:444.3px;top:258.1px;">QP</div>
<div class="cell" style="left:475.4px;top:258.1px;">QP</div>
<div class="cell" style="left:506.5px;top:258.1px;">QP</div>
<div class="cell" style="left:537.7px;top:258.1px;">QP</div>
<div class="cell" style="left:568.8px;top:258.1px;">QP</div>
<div class="rowbg" style="top:267.6px;"></div>
<svg class="abs" style="left:193.5px;top:267.1px" width="8" height="11" viewBox="0 0 8 11"><rect x="0.8" y="2" width="5" height="7.6" fill="#ecd8ce" stroke="#a87c6c" stroke-width="0.8"/><path d="M2,4 L4.6,4 M2,5.6 L4.6,5.6 M2,7.2 L4.6,7.2 M3.3,3.2 L3.3,8.4" stroke="#c8a090" stroke-width="0.6"/><rect x="4.9" y="1" width="1.2" height="3" fill="#e43828"/><circle cx="5.5" cy="1.2" r="1" fill="#e43828"/></svg>
<div class="cell" style="left:203px;top:269.1px;font-size:5.6px;">LaserPower</div>
<div class="cell" style="left:273px;top:269.1px;">W</div>
<div class="cell" style="left:288.7px;top:269.1px;">1500.000</div>
<div class="cell" style="left:319.8px;top:269.1px;">0.000</div>
<div class="cell" style="left:350.9px;top:269.1px;">0.000</div>
<div class="cell" style="left:382.1px;top:269.1px;">0.000</div>
<div class="cell" style="left:413.2px;top:269.1px;">0.000</div>
<div class="cell" style="left:444.3px;top:269.1px;">0.000</div>
<div class="cell" style="left:475.4px;top:269.1px;">0.000</div>
<div class="cell" style="left:506.5px;top:269.1px;">0.000</div>
<div class="cell" style="left:537.7px;top:269.1px;">0.000</div>
<div class="cell" style="left:568.8px;top:269.1px;">0.000</div>
<div class="rowbg" style="top:278.6px;"></div>
<svg class="abs" style="left:193.5px;top:278.1px" width="8" height="11" viewBox="0 0 8 11"><rect x="0.8" y="2" width="5" height="7.6" fill="#ecd8ce" stroke="#a87c6c" stroke-width="0.8"/><path d="M2,4 L4.6,4 M2,5.6 L4.6,5.6 M2,7.2 L4.6,7.2 M3.3,3.2 L3.3,8.4" stroke="#c8a090" stroke-width="0.6"/><rect x="4.9" y="1" width="1.2" height="3" fill="#e43828"/><circle cx="5.5" cy="1.2" r="1" fill="#e43828"/></svg>
<div class="cell" style="left:203px;top:280.1px;font-size:5.6px;">Frequency</div>
<div class="cell" style="left:273px;top:280.1px;">Hz</div>
<div class="cell" style="left:288.7px;top:280.1px;">50.000</div>
<div class="cell" style="left:319.8px;top:280.1px;">0.000</div>
<div class="cell" style="left:350.9px;top:280.1px;">0.000</div>
<div class="cell" style="left:382.1px;top:280.1px;">0.000</div>
<div class="cell" style="left:413.2px;top:280.1px;">0.000</div>
<div class="cell" style="left:444.3px;top:280.1px;">0.000</div>
<div class="cell" style="left:475.4px;top:280.1px;">0.000</div>
<div class="cell" style="left:506.5px;top:280.1px;">0.000</div>
<div class="cell" style="left:537.7px;top:280.1px;">0.000</div>
<div class="cell" style="left:568.8px;top:280.1px;">0.000</div>
<div class="rowbg" style="top:289.7px;"></div>
<svg class="abs" style="left:193.5px;top:289.2px" width="8" height="11" viewBox="0 0 8 11"><rect x="0.8" y="2" width="5" height="7.6" fill="#ecd8ce" stroke="#a87c6c" stroke-width="0.8"/><path d="M2,4 L4.6,4 M2,5.6 L4.6,5.6 M2,7.2 L4.6,7.2 M3.3,3.2 L3.3,8.4" stroke="#c8a090" stroke-width="0.6"/><rect x="4.9" y="1" width="1.2" height="3" fill="#e43828"/><circle cx="5.5" cy="1.2" r="1" fill="#e43828"/></svg>
<div class="cell" style="left:203px;top:291.2px;font-size:5.6px;">DutyCycle</div>
<div class="cell" style="left:273px;top:291.2px;">%</div>
<div class="cell" style="left:288.7px;top:291.2px;">8.000</div>
<div class="cell" style="left:319.8px;top:291.2px;">0.000</div>
<div class="cell" style="left:350.9px;top:291.2px;">0.000</div>
<div class="cell" style="left:382.1px;top:291.2px;">0.000</div>
<div class="cell" style="left:413.2px;top:291.2px;">0.000</div>
<div class="cell" style="left:444.3px;top:291.2px;">0.000</div>
<div class="cell" style="left:475.4px;top:291.2px;">0.000</div>
<div class="cell" style="left:506.5px;top:291.2px;">0.000</div>
<div class="cell" style="left:537.7px;top:291.2px;">0.000</div>
<div class="cell" style="left:568.8px;top:291.2px;">0.000</div>
<div class="rowbg" style="top:300.8px;"></div>
<svg class="abs" style="left:193.5px;top:300.2px" width="8" height="11" viewBox="0 0 8 11"><rect x="0.8" y="2" width="5" height="7.6" fill="#ecd8ce" stroke="#a87c6c" stroke-width="0.8"/><path d="M2,4 L4.6,4 M2,5.6 L4.6,5.6 M2,7.2 L4.6,7.2 M3.3,3.2 L3.3,8.4" stroke="#c8a090" stroke-width="0.6"/><rect x="4.9" y="1" width="1.2" height="3" fill="#e43828"/><circle cx="5.5" cy="1.2" r="1" fill="#e43828"/></svg>
<div class="cell" style="left:203px;top:302.2px;font-size:5.6px;">GasPressure</div>
<div class="cell" style="left:273px;top:302.2px;">bar</div>
<div class="cell" style="left:288.7px;top:302.2px;">5.000</div>
<div class="cell" style="left:319.8px;top:302.2px;">0.000</div>
<div class="cell" style="left:350.9px;top:302.2px;">0.000</div>
<div class="cell" style="left:382.1px;top:302.2px;">0.000</div>
<div class="cell" style="left:413.2px;top:302.2px;">0.000</div>
<div class="cell" style="left:444.3px;top:302.2px;">0.000</div>
<div class="cell" style="left:475.4px;top:302.2px;">0.000</div>
<div class="cell" style="left:506.5px;top:302.2px;">0.000</div>
<div class="cell" style="left:537.7px;top:302.2px;">0.000</div>
<div class="cell" style="left:568.8px;top:302.2px;">0.000</div>
<div class="rowbg" style="top:311.8px;"></div>
<svg class="abs" style="left:193.5px;top:311.3px" width="8" height="11" viewBox="0 0 8 11"><rect x="0.8" y="2" width="5" height="7.6" fill="#ecd8ce" stroke="#a87c6c" stroke-width="0.8"/><path d="M2,4 L4.6,4 M2,5.6 L4.6,5.6 M2,7.2 L4.6,7.2 M3.3,3.2 L3.3,8.4" stroke="#c8a090" stroke-width="0.6"/><rect x="4.9" y="1" width="1.2" height="3" fill="#e43828"/><circle cx="5.5" cy="1.2" r="1" fill="#e43828"/></svg>
<div class="cell" style="left:203px;top:313.3px;font-size:5.6px;">NozzleDistance</div>
<div class="cell" style="left:273px;top:313.3px;">mm</div>
<div class="cell" style="left:288.7px;top:313.3px;">4.000</div>
<div class="cell" style="left:319.8px;top:313.3px;">4.000</div>
<div class="cell" style="left:350.9px;top:313.3px;">4.000</div>
<div class="cell" style="left:382.1px;top:313.3px;">4.000</div>
<div class="cell" style="left:413.2px;top:313.3px;">4.000</div>
<div class="cell" style="left:444.3px;top:313.3px;">4.000</div>
<div class="cell" style="left:475.4px;top:313.3px;">4.000</div>
<div class="cell" style="left:506.5px;top:313.3px;">4.000</div>
<div class="cell" style="left:537.7px;top:313.3px;">4.000</div>
<div class="cell" style="left:568.8px;top:313.3px;">4.000</div>
<div class="rowbg" style="top:322.9px;"></div>
<svg class="abs" style="left:193.5px;top:322.4px" width="8" height="11" viewBox="0 0 8 11"><rect x="0.8" y="2" width="5" height="7.6" fill="#ecd8ce" stroke="#a87c6c" stroke-width="0.8"/><path d="M2,4 L4.6,4 M2,5.6 L4.6,5.6 M2,7.2 L4.6,7.2 M3.3,3.2 L3.3,8.4" stroke="#c8a090" stroke-width="0.6"/><rect x="4.9" y="1" width="1.2" height="3" fill="#e43828"/><circle cx="5.5" cy="1.2" r="1" fill="#e43828"/></svg>
<div class="cell" style="left:203px;top:324.4px;font-size:5.6px;">Focal</div>
<div class="cell" style="left:273px;top:324.4px;">mm</div>
<div class="cell" style="left:288.7px;top:324.4px;">-1.000</div>
<div class="cell" style="left:319.8px;top:324.4px;">0.000</div>
<div class="cell" style="left:350.9px;top:324.4px;">0.000</div>
<div class="cell" style="left:382.1px;top:324.4px;">0.000</div>
<div class="cell" style="left:413.2px;top:324.4px;">0.000</div>
<div class="cell" style="left:444.3px;top:324.4px;">0.000</div>
<div class="cell" style="left:475.4px;top:324.4px;">0.000</div>
<div class="cell" style="left:506.5px;top:324.4px;">0.000</div>
<div class="cell" style="left:537.7px;top:324.4px;">0.000</div>
<div class="cell" style="left:568.8px;top:324.4px;">0.000</div>
<div class="rowbg" style="top:333.9px;"></div>
<svg class="abs" style="left:193.5px;top:333.4px" width="8" height="11" viewBox="0 0 8 11"><rect x="0.8" y="2" width="5" height="7.6" fill="#ecd8ce" stroke="#a87c6c" stroke-width="0.8"/><path d="M2,4 L4.6,4 M2,5.6 L4.6,5.6 M2,7.2 L4.6,7.2 M3.3,3.2 L3.3,8.4" stroke="#c8a090" stroke-width="0.6"/><rect x="4.9" y="1" width="1.2" height="3" fill="#e43828"/><circle cx="5.5" cy="1.2" r="1" fill="#e43828"/></svg>
<div class="cell" style="left:203px;top:335.4px;font-size:5.6px;">DelayGas</div>
<div class="cell" style="left:273px;top:335.4px;">ms</div>
<div class="cell" style="left:288.7px;top:335.4px;">0.000</div>
<div class="cell" style="left:319.8px;top:335.4px;">0.000</div>
<div class="cell" style="left:350.9px;top:335.4px;">0.000</div>
<div class="cell" style="left:382.1px;top:335.4px;">0.000</div>
<div class="cell" style="left:413.2px;top:335.4px;">0.000</div>
<div class="cell" style="left:444.3px;top:335.4px;">0.000</div>
<div class="cell" style="left:475.4px;top:335.4px;">0.000</div>
<div class="cell" style="left:506.5px;top:335.4px;">0.000</div>
<div class="cell" style="left:537.7px;top:335.4px;">0.000</div>
<div class="cell" style="left:568.8px;top:335.4px;">0.000</div>
<div class="rowbg" style="top:344.9px;"></div>
<svg class="abs" style="left:193.5px;top:344.4px" width="8" height="11" viewBox="0 0 8 11"><rect x="0.8" y="2" width="5" height="7.6" fill="#ecd8ce" stroke="#a87c6c" stroke-width="0.8"/><path d="M2,4 L4.6,4 M2,5.6 L4.6,5.6 M2,7.2 L4.6,7.2 M3.3,3.2 L3.3,8.4" stroke="#c8a090" stroke-width="0.6"/><rect x="4.9" y="1" width="1.2" height="3" fill="#e43828"/><circle cx="5.5" cy="1.2" r="1" fill="#e43828"/></svg>
<div class="cell" style="left:203px;top:346.4px;font-size:5.6px;">StepEnable</div>
<div class="cell" style="left:288.7px;top:346.4px;">Yes</div>
<div class="cell" style="left:319.8px;top:346.4px;">No</div>
<div class="cell" style="left:350.9px;top:346.4px;">No</div>
<div class="cell" style="left:382.1px;top:346.4px;">No</div>
<div class="cell" style="left:413.2px;top:346.4px;">No</div>
<div class="cell" style="left:444.3px;top:346.4px;">No</div>
<div class="cell" style="left:475.4px;top:346.4px;">No</div>
<div class="cell" style="left:506.5px;top:346.4px;">No</div>
<div class="cell" style="left:537.7px;top:346.4px;">No</div>
<div class="cell" style="left:568.8px;top:346.4px;">No</div>
<div class="abs" style="left:193px;top:361.0px;width:405px;height:1px;background:#9ab4e0;"></div>
<div class="t" style="left:192.5px;top:358.4px;padding-left:2.6px;font-size:5.1px;-webkit-text-stroke:0.15px #3050c8;color:#2040c0;background:#fff;padding-right:2px;">MicroWelding</div>
<div class="rowbg" style="top:366.7px;"></div>
<svg class="abs" style="left:193.5px;top:366.2px" width="8" height="11" viewBox="0 0 8 11"><rect x="0.8" y="2" width="5" height="7.6" fill="#ecd8ce" stroke="#a87c6c" stroke-width="0.8"/><path d="M2,4 L4.6,4 M2,5.6 L4.6,5.6 M2,7.2 L4.6,7.2 M3.3,3.2 L3.3,8.4" stroke="#c8a090" stroke-width="0.6"/><rect x="4.9" y="1" width="1.2" height="3" fill="#e43828"/><circle cx="5.5" cy="1.2" r="1" fill="#e43828"/></svg>
<div class="cell" style="left:203px;top:368.2px;font-size:5.6px;">MW_NozzleDistance</div>
<div class="cell" style="left:273px;top:368.2px;">mm</div>
<div class="cell" style="left:288.7px;top:368.2px;">0.800</div>
<div class="cell" style="left:319.8px;top:368.2px;">0.800</div>
<div class="cell" style="left:350.9px;top:368.2px;">0.800</div>
<div class="cell" style="left:382.1px;top:368.2px;">0.800</div>
<div class="cell" style="left:413.2px;top:368.2px;">0.800</div>
<div class="cell" style="left:444.3px;top:368.2px;">0.800</div>
<div class="cell" style="left:475.4px;top:368.2px;">0.800</div>
<div class="cell" style="left:506.5px;top:368.2px;">0.800</div>
<div class="cell" style="left:537.7px;top:368.2px;">0.800</div>
<div class="cell" style="left:568.8px;top:368.2px;">0.800</div>
<div class="rowbg" style="top:377.8px;"></div>
<svg class="abs" style="left:193.5px;top:377.2px" width="8" height="11" viewBox="0 0 8 11"><rect x="0.8" y="2" width="5" height="7.6" fill="#ecd8ce" stroke="#a87c6c" stroke-width="0.8"/><path d="M2,4 L4.6,4 M2,5.6 L4.6,5.6 M2,7.2 L4.6,7.2 M3.3,3.2 L3.3,8.4" stroke="#c8a090" stroke-width="0.6"/><rect x="4.9" y="1" width="1.2" height="3" fill="#e43828"/><circle cx="5.5" cy="1.2" r="1" fill="#e43828"/></svg>
<div class="cell" style="left:203px;top:379.2px;font-size:5.6px;">MW_Time</div>
<div class="cell" style="left:273px;top:379.2px;">ms</div>
<div class="cell" style="left:288.7px;top:379.2px;">0.000</div>
<div class="cell" style="left:319.8px;top:379.2px;">0.000</div>
<div class="cell" style="left:350.9px;top:379.2px;">0.000</div>
<div class="cell" style="left:382.1px;top:379.2px;">0.000</div>
<div class="cell" style="left:413.2px;top:379.2px;">0.000</div>
<div class="cell" style="left:444.3px;top:379.2px;">0.000</div>
<div class="cell" style="left:475.4px;top:379.2px;">0.000</div>
<div class="cell" style="left:506.5px;top:379.2px;">0.000</div>
<div class="cell" style="left:537.7px;top:379.2px;">0.000</div>
<div class="cell" style="left:568.8px;top:379.2px;">0.000</div>
<div class="rowbg" style="top:388.8px;"></div>
<svg class="abs" style="left:193.5px;top:388.3px" width="8" height="11" viewBox="0 0 8 11"><rect x="0.8" y="2" width="5" height="7.6" fill="#ecd8ce" stroke="#a87c6c" stroke-width="0.8"/><path d="M2,4 L4.6,4 M2,5.6 L4.6,5.6 M2,7.2 L4.6,7.2 M3.3,3.2 L3.3,8.4" stroke="#c8a090" stroke-width="0.6"/><rect x="4.9" y="1" width="1.2" height="3" fill="#e43828"/><circle cx="5.5" cy="1.2" r="1" fill="#e43828"/></svg>
<div class="cell" style="left:203px;top:390.3px;font-size:5.6px;">MW_DelayGasBefore</div>
<div class="cell" style="left:273px;top:390.3px;">ms</div>
<div class="cell" style="left:288.7px;top:390.3px;">100.000</div>
<div class="cell" style="left:319.8px;top:390.3px;">100.000</div>
<div class="cell" style="left:350.9px;top:390.3px;">100.000</div>
<div class="cell" style="left:382.1px;top:390.3px;">100.000</div>
<div class="cell" style="left:413.2px;top:390.3px;">100.000</div>
<div class="cell" style="left:444.3px;top:390.3px;">100.000</div>
<div class="cell" style="left:475.4px;top:390.3px;">100.000</div>
<div class="cell" style="left:506.5px;top:390.3px;">100.000</div>
<div class="cell" style="left:537.7px;top:390.3px;">100.000</div>
<div class="cell" style="left:568.8px;top:390.3px;">100.000</div>
<div class="rowbg" style="top:399.9px;"></div>
<svg class="abs" style="left:193.5px;top:399.4px" width="8" height="11" viewBox="0 0 8 11"><rect x="0.8" y="2" width="5" height="7.6" fill="#ecd8ce" stroke="#a87c6c" stroke-width="0.8"/><path d="M2,4 L4.6,4 M2,5.6 L4.6,5.6 M2,7.2 L4.6,7.2 M3.3,3.2 L3.3,8.4" stroke="#c8a090" stroke-width="0.6"/><rect x="4.9" y="1" width="1.2" height="3" fill="#e43828"/><circle cx="5.5" cy="1.2" r="1" fill="#e43828"/></svg>
<div class="cell" style="left:203px;top:401.4px;font-size:5.6px;">MW_DelayGasAfter</div>
<div class="cell" style="left:273px;top:401.4px;">ms</div>
<div class="cell" style="left:288.7px;top:401.4px;">2000.000</div>
<div class="cell" style="left:319.8px;top:401.4px;">2000.000</div>
<div class="cell" style="left:350.9px;top:401.4px;">2000.000</div>
<div class="cell" style="left:382.1px;top:401.4px;">2000.000</div>
<div class="cell" style="left:413.2px;top:401.4px;">2000.000</div>
<div class="cell" style="left:444.3px;top:401.4px;">2000.000</div>
<div class="cell" style="left:475.4px;top:401.4px;">2000.000</div>
<div class="cell" style="left:506.5px;top:401.4px;">2000.000</div>
<div class="cell" style="left:537.7px;top:401.4px;">2000.000</div>
<div class="cell" style="left:568.8px;top:401.4px;">2000.000</div>
<!--/TABLE-->
</body>
</html>
